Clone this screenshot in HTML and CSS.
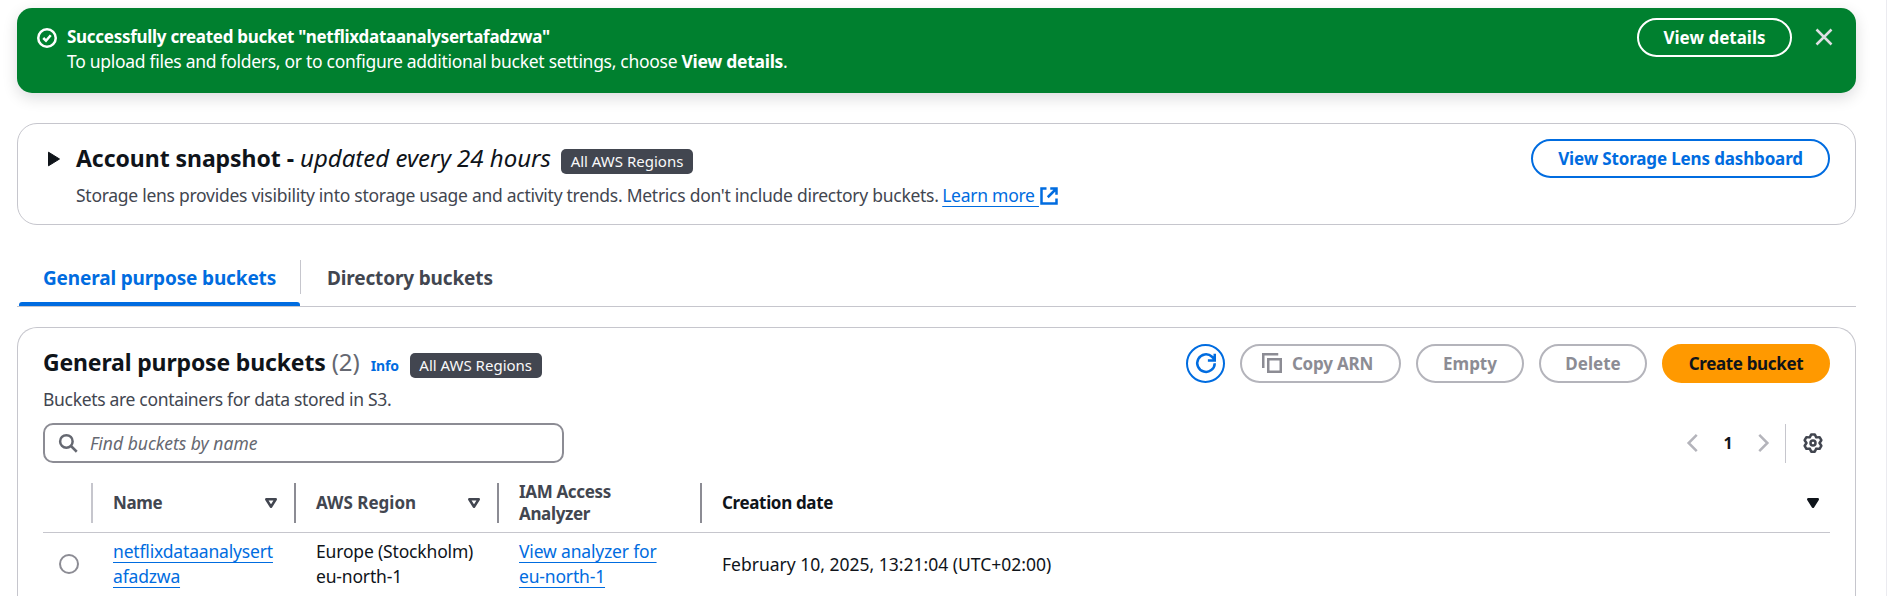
FILE: index.html
```html
<!DOCTYPE html>
<html lang="en">
<head>
<meta charset="utf-8">
<title>S3 buckets</title>
<link rel="stylesheet" href="styles.css">
</head>
<body>
<main class="page">
  <section class="flash">
    <svg class="flash-icon" viewBox="0 0 16 16"><circle cx="8" cy="8" r="7"/><path d="m5 8 2.200 2.200 3.800-4.400"/></svg>
    <div class="flash-text">
      <div><b class="t-flash-title">Successfully created bucket "netflixdataanalysertafadzwa"</b></div>
      <div><span class="t-flash-body">To upload files and folders, or to configure additional bucket settings, choose <b>View details</b>.</span></div>
    </div>
    <button class="btn btn-light"><span>View details</span></button>
    <svg class="flash-close" viewBox="0 0 16 16"><path d="m2 2 12 12M14 2 2 14"/></svg>
  </section>

  <section class="card snapshot">
    <svg class="caret" viewBox="0 0 14 16"><path d="M1.500 1.200 12.500 8 1.500 14.800z"/></svg>
    <div class="snapshot-text">
      <h2><span class="t-snap">Account snapshot -</span><em>updated every 24 hours</em><span class="badge">All AWS Regions</span></h2>
      <p><span class="t-lens">Storage lens provides visibility into storage usage and activity trends. Metrics don't include directory buckets.</span> <a class="learn" href="#">Learn more&nbsp;</a><svg class="ext" viewBox="0 0 16 16"><path d="M6 2H2v12h12v-4M9 2h5v5M14 2 7 9"/></svg></p>
    </div>
    <button class="btn btn-blue"><span class="t-dash">View Storage Lens dashboard</span></button>
  </section>

  <nav class="tabs">
    <a class="tab active"><span>General purpose buckets</span></a>
    <a class="tab"><span>Directory buckets</span></a>
  </nav>

  <section class="card buckets">
    <header class="head">
      <div class="head-text">
        <h2><span class="t-gpb">General purpose buckets</span><span class="count">(2)</span><span class="info">Info</span><span class="badge">All AWS Regions</span></h2>
        <p><span class="t-desc">Buckets are containers for data stored in S3.</span></p>
      </div>
      <div class="actions">
        <button class="btn btn-round"><svg viewBox="0 0 16 16"><path d="M15 8.200A7 7 0 1 1 12.800 3L15 5.200M15 0.500v5.500H9.500"/></svg></button>
        <button class="btn btn-off btn-copy"><svg viewBox="0 0 16 16"><path d="M5 5h10v10H5zM1 12V1h12"/></svg><span class="t-arn">Copy ARN</span></button>
        <button class="btn btn-off btn-mid"><span>Empty</span></button>
        <button class="btn btn-off btn-mid"><span>Delete</span></button>
        <button class="btn btn-primary"><span class="t-create">Create bucket</span></button>
      </div>
    </header>
    <div class="tools">
      <div class="search">
        <svg viewBox="0 0 16 16"><circle cx="6.700" cy="6.700" r="5"/><path d="m10.400 10.400 4.600 4.600"/></svg>
        <span>Find buckets by name</span>
      </div>
      <div class="pager">
        <svg class="chev" viewBox="0 0 16 16"><path d="M11 1.500 4.500 8l6.500 6.500"/></svg>
        <b>1</b>
        <svg class="chev" viewBox="0 0 16 16"><path d="M5 1.500 11.500 8 5 14.500"/></svg>
        <span class="rule"></span>
        <svg class="gear" viewBox="0 0 16 16"><path d="M6.600 1.100H9.400L10.600 3.500 13.280 3.340 14.680 5.760 13.200 8 14.680 10.240 13.280 12.660 10.600 12.500 9.400 14.900H6.600L5.400 12.500 2.720 12.660 1.320 10.240 2.800 8 1.320 5.760 2.720 3.340 5.400 3.500z"/><circle cx="8" cy="8" r="2"/></svg>
      </div>
    </div>
    <div class="grid thead">
      <div></div>
      <div class="th first"><span class="t-name">Name</span><svg class="sort" viewBox="0 0 16 16"><path d="M4.200 5h7.600L8 11z"/></svg></div>
      <div class="th"><span>AWS Region</span><svg class="sort" viewBox="0 0 16 16"><path d="M4.200 5h7.600L8 11z"/></svg></div>
      <div class="th"><span class="t-iam">IAM Access<br>Analyzer</span></div>
      <div class="th dark"><span class="t-date">Creation date</span><svg class="sort full" viewBox="0 0 16 16"><path d="M4.200 5h7.600L8 11z"/></svg></div>
    </div>
    <div class="grid row">
      <div class="pick"><span class="radio"></span></div>
      <div class="td"><a href="#">netflixdataanalysert<br>afadzwa</a></div>
      <div class="td"><span>Europe (Stockholm)<br>eu-north-1</span></div>
      <div class="td"><a href="#">View analyzer for<br>eu-north-1</a></div>
      <div class="td when"><span>February 10, 2025, 13:21:04 (UTC+02:00)</span></div>
    </div>
  </section>
</main>
</body>
</html>
```
FILE: styles.css
```css
* { box-sizing: border-box; }
body {
  margin: 0;
  height: 596px;
  overflow: hidden;
  background: #fff;
  color: #0f141a;
  font: 17.5px/25px "Noto Sans", "Open Sans", sans-serif;
}
.page {
  width: 1887px;
  height: 596px;
  padding: 8px 30px 0 17px;
  border-right: 1px solid #ebebf0;
  overflow: hidden;
}
h2, p { margin: 0; }
h2 { display: flex; align-items: baseline; height: 30px; font-size: 23px; line-height: 30px; font-weight: 700; }
svg { fill: none; stroke: currentColor; stroke-width: 2; flex: none; overflow: visible; }
span, b, em { white-space: nowrap; }
a { color: #006ce0; }

.btn {
  display: flex;
  align-items: center;
  justify-content: center;
  height: 39px;
  border: 2px solid currentColor;
  border-radius: 20px;
  background: transparent;
  font: 700 17px/25px "Noto Sans", "Open Sans", sans-serif;
  padding: 0 0 1px;
  flex: none;
}

.flash {
  display: flex;
  align-items: flex-start;
  height: 85px;
  padding: 10px 22px 0 20px;
  border-radius: 15px;
  background: #00802f;
  color: #fff;
  box-shadow: 0 5px 15px rgba(0, 7, 22, 0.14);
}
.flash-icon { width: 20px; height: 20px; margin: 10px 10px 0 0; }
.flash-text { flex: 1; padding-top: 6px; }
.t-flash-title { font-size: 17px; letter-spacing: -0.28px; }
.t-flash-body { letter-spacing: -0.29px; }
.btn-light { width: 155px; color: #fff; }
.flash-close { width: 20px; height: 20px; margin: 9px 0 0 22px; color: #dedee3; }

.card { border: 1px solid #c6c6cd; border-radius: 20px; background: #fff; }
.snapshot {
  display: flex;
  align-items: flex-start;
  height: 102px;
  margin-top: 30px;
  padding: 15px 25px 0 29px;
}
.caret { width: 14px; height: 16px; margin: 12px 15px 0 0; fill: currentColor; stroke-width: 1; stroke-linejoin: round; }
.snapshot-text { flex: 1; padding-top: 4px; }
.snapshot-text p { margin-top: 10px; color: #424650; }
.t-snap { letter-spacing: -0.05px; }
.snapshot em { font-weight: 400; font-size: 24px; margin-left: 6px; }
.t-lens, .learn { letter-spacing: -0.27px; }
.t-dash { letter-spacing: -0.15px; }
.btn-blue { width: 299px; color: #006ce0; }
.badge {
  width: 132px;
  height: 25px;
  margin-left: 10px;
  border-radius: 5px;
  background: #424650;
  color: #f9f9fa;
  font: 400 15px/25px "Noto Sans", sans-serif;
  text-align: center;
}
.ext { width: 20px; height: 20px; color: #006ce0; vertical-align: -4px; }
.learn, .td a { text-decoration: underline 1px; text-underline-offset: 4px; text-decoration-skip-ink: none; }
.learn { margin-left: -1px; }

.tabs {
  display: flex;
  height: 47px;
  margin-top: 35px;
  border-bottom: 1px solid #c6c6cd;
}
.tab {
  display: flex;
  padding: 6px 0 0 27px;
  font-size: 19px;
  line-height: 25px;
  font-weight: 700;
  letter-spacing: -0.15px;
  color: #424650;
}
.tab.active {
  flex-direction: column;
  justify-content: space-between;
  width: 283px;
  padding-left: 2px;
  color: #006ce0;
}
.tab.active span { padding-left: 24px; }
.tab.active::after { content: ""; height: 4px; border-radius: 3px 3px 0 0; background: #006ce0; }
.tab + .tab { border-left: 1px solid #c6c6cd; height: 34px; padding-left: 26px; }

.buckets { height: 300px; margin-top: 20px; padding: 16px 25px 0 25px; border-bottom: 0; border-radius: 20px 20px 0 0; }
.head { display: flex; justify-content: space-between; height: 79px; }
.head-text { padding-top: 3px; }
.head-text p { margin-top: 10px; color: #424650; }
.t-gpb { letter-spacing: -0.16px; }
.t-desc { letter-spacing: -0.32px; }
.count { font-weight: 400; font-size: 24px; color: #656871; margin-left: 6px; }
.info { font-size: 14px; letter-spacing: -0.2px; color: #006ce0; margin: 0 1px 0 11px; }
.actions { display: flex; gap: 15px; }
.btn svg { width: 20px; height: 20px; }
.btn-round { width: 39px; color: #006ce0; }
.btn-off { color: #8c8c94; border-color: #b4b4bb; gap: 10px; }
.btn-copy { width: 161px; padding-right: 6px; }
.t-arn { letter-spacing: -0.2px; }
.btn-mid { width: 108px; }
.btn-primary { width: 168px; background: #ff9900; border-color: #ff9900; color: #0f141a; }
.t-create { letter-spacing: -0.35px; }
.tools { display: flex; justify-content: space-between; height: 40px; }
.search {
  display: flex;
  align-items: center;
  width: 521px;
  height: 40px;
  padding-left: 13px;
  gap: 12px;
  border: 2px solid #8c8c94;
  border-radius: 10px;
  color: #656871;
  font-style: italic;
}
.search svg { width: 20px; height: 20px; }
.pager { display: flex; align-items: center; padding-right: 7px; }
.chev { width: 20px; height: 20px; color: #b4b4bb; }
.rule { width: 1px; height: 39px; background: #c6c6cd; margin: 0 17px 0 12px; }
.pager b { width: 50px; text-align: center; font-size: 16px; }
.gear { width: 20px; height: 20px; color: #424650; stroke-linejoin: round; }

.grid { display: grid; grid-template-columns: 48px 203px 203px 203px 1fr; }
.thead { height: 70px; border-bottom: 1px solid #c6c6cd; padding-top: 20px; color: #424650; font-size: 17px; font-weight: 700; }
.th { display: flex; align-items: center; justify-content: space-between; height: 40px; padding: 0 13px 0 20px; border-left: 2px solid #8c8c94; line-height: 22px; }
.th.first { border-color: #c6c6cd; }
.t-name, .t-date, .t-iam { letter-spacing: -0.35px; }
.dark { color: #0f141a; padding-right: 7px; }
.sort { width: 20px; height: 20px; stroke-linejoin: round; }
.full { fill: currentColor; }
.row { padding-top: 6px; height: 64px; }
.td { padding-left: 22px; display: flex; align-items: center; height: 50px; letter-spacing: -0.17px; }
.when { letter-spacing: 0; }
.pick { display: flex; align-items: center; height: 50px; padding-left: 16px; }
.radio { width: 20px; height: 20px; border: 2px solid #8c8c94; border-radius: 50%; }
```
